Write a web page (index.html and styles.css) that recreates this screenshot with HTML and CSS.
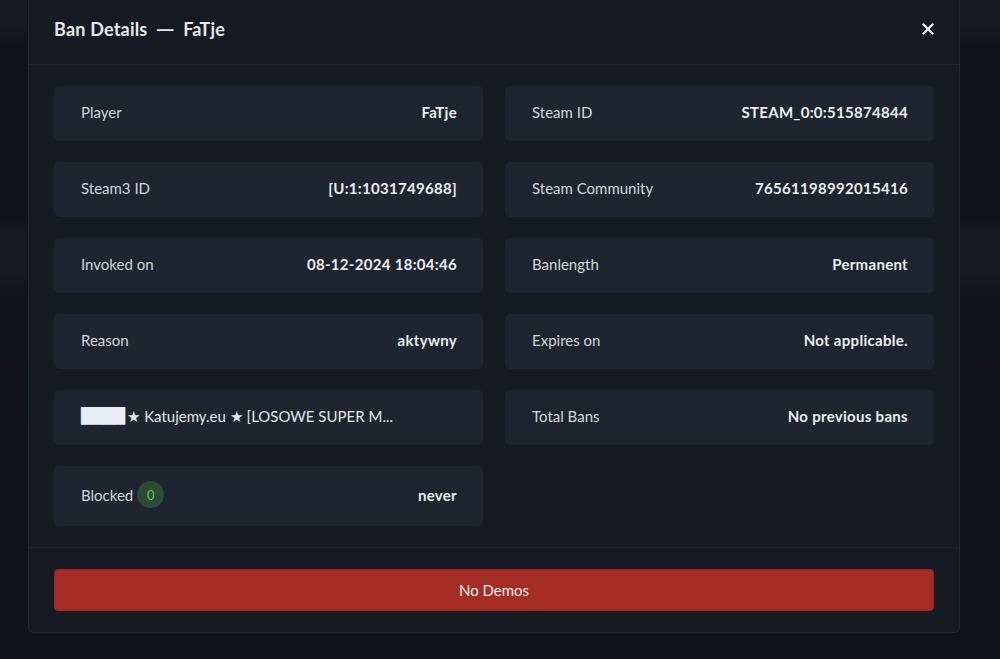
FILE: index.html
```html
<!DOCTYPE html>
<html lang="en">
<head>
    <meta charset="UTF-8">
    <meta name="viewport" content="width=device-width, initial-scale=1.0">
    <title>Ban Details</title>
    <link rel="stylesheet" href="styles.css">
</head>
<body>
    <div class="modal">
        <div class="modal-header">
            <h1 class="modal-title">Ban Details <span class="dash">—</span> FaTje</h1>
            <button class="close-btn" aria-label="Close">
                <svg width="12" height="12" viewBox="0 0 12 12">
                    <path d="M1.5 1.5 L10.5 10.5 M10.5 1.5 L1.5 10.5" stroke="#e8eaee" stroke-width="2.4" stroke-linecap="round"/>
                </svg>
            </button>
        </div>

        <!-- Details grid -->
        <div class="modal-body">
            <div class="detail-card">
                <span class="detail-label">Player</span>
                <span class="detail-value">FaTje</span>
            </div>
            <div class="detail-card">
                <span class="detail-label">Steam ID</span>
                <span class="detail-value">STEAM_0:0:515874844</span>
            </div>

            <div class="detail-card">
                <span class="detail-label">Steam3 ID</span>
                <span class="detail-value">[U:1:1031749688]</span>
            </div>
            <div class="detail-card">
                <span class="detail-label">Steam Community</span>
                <span class="detail-value">76561198992015416</span>
            </div>

            <div class="detail-card">
                <span class="detail-label">Invoked on</span>
                <span class="detail-value">08-12-2024 18:04:46</span>
            </div>
            <div class="detail-card">
                <span class="detail-label">Banlength</span>
                <span class="detail-value">Permanent</span>
            </div>

            <div class="detail-card">
                <span class="detail-label">Reason</span>
                <span class="detail-value">aktywny</span>
            </div>
            <div class="detail-card">
                <span class="detail-label">Expires on</span>
                <span class="detail-value">Not applicable.</span>
            </div>

            <div class="detail-card">
                <span class="detail-label server-name"><span class="blocks">████</span> ★ Katujemy.eu ★ [LOSOWE SUPER M...</span>
            </div>
            <div class="detail-card">
                <span class="detail-label">Total Bans</span>
                <span class="detail-value">No previous bans</span>
            </div>

            <div class="detail-card detail-card-tall">
                <span class="detail-label">Blocked <span class="badge">0</span></span>
                <span class="detail-value">never</span>
            </div>
        </div>

        <div class="modal-footer">
            <button class="btn btn-danger">No Demos</button>
        </div>
    </div>
</body>
</html>
```

FILE: styles.css
```css
* {
    margin: 0;
    padding: 0;
    box-sizing: border-box;
}

body {
    width: 1000px;
    height: 659px;
    overflow: hidden;
    font-family: Lato, 'Noto Sans', sans-serif;
    color: #e9ecef;
    background: linear-gradient(180deg,
        #171c24 0px,
        #151a21 28px,
        #0f141a 45px,
        #0f141a 210px,
        #151a21 235px,
        #151a21 275px,
        #0f141a 300px,
        #0f141a 355px,
        #131418 370px,
        #131418 415px,
        #0f141a 435px,
        #0f141a 100%);
}

.modal {
    width: 932px;
    margin-left: 28px;
    background: #161a22;
    border: 1px solid #23282f;
    border-top: none;
    border-radius: 0 0 6px 6px;
}

.modal-header {
    display: flex;
    align-items: center;
    justify-content: space-between;
    padding: 15px 25px 21px 25px;
    border-bottom: 1px solid #22272e;
}

.modal-title {
    font-size: 18px;
    font-weight: 700;
    line-height: 28px;
    color: #e6e8eb;
    letter-spacing: 0.2px;
}

.dash {
    display: inline-block;
    margin: 0 6px;
    transform: scaleX(1.35);
}

.close-btn {
    background: none;
    border: none;
    width: 14px;
    height: 14px;
    display: flex;
    align-items: center;
    justify-content: center;
    margin-right: -1px;
    cursor: pointer;
}

.modal-body {
    display: grid;
    grid-template-columns: 1fr 1fr;
    column-gap: 22px;
    row-gap: 21px;
    padding: 21px 25px;
    border-bottom: 1px solid #22272e;
}

.detail-card {
    display: flex;
    align-items: center;
    justify-content: space-between;
    height: 55px;
    padding: 0 26px 3px 27px;
    background: #1f2530;
    border-radius: 5px;
    font-size: 15px;
}

.detail-card-tall {
    height: 60px;
}

.detail-label {
    color: #d2d6dc;
    display: flex;
    align-items: center;
    white-space: nowrap;
}

.server-name {
    color: #e3e6ea;
}

.blocks {
    font-family: 'DejaVu Sans', sans-serif;
    color: #e8ecf5;
    margin-right: 3px;
    letter-spacing: -0.7px;
}

.detail-value {
    font-weight: 700;
    color: #ebedf0;
    letter-spacing: 0.3px;
}

.badge {
    display: inline-flex;
    align-items: center;
    justify-content: center;
    width: 27px;
    height: 27px;
    margin-left: 4px;
    border-radius: 50%;
    background: #2c4c36;
    color: #5fbf5f;
    font-size: 13px;
}

.modal-footer {
    padding: 21px 25px;
}

.btn {
    width: 100%;
    height: 42px;
    border: 1px solid #8f2720;
    border-radius: 4px;
    font-family: Lato, 'Noto Sans', sans-serif;
    font-size: 15px;
    cursor: pointer;
}

.btn-danger {
    background: #a52d25;
    color: #f0ecec;
}
```
